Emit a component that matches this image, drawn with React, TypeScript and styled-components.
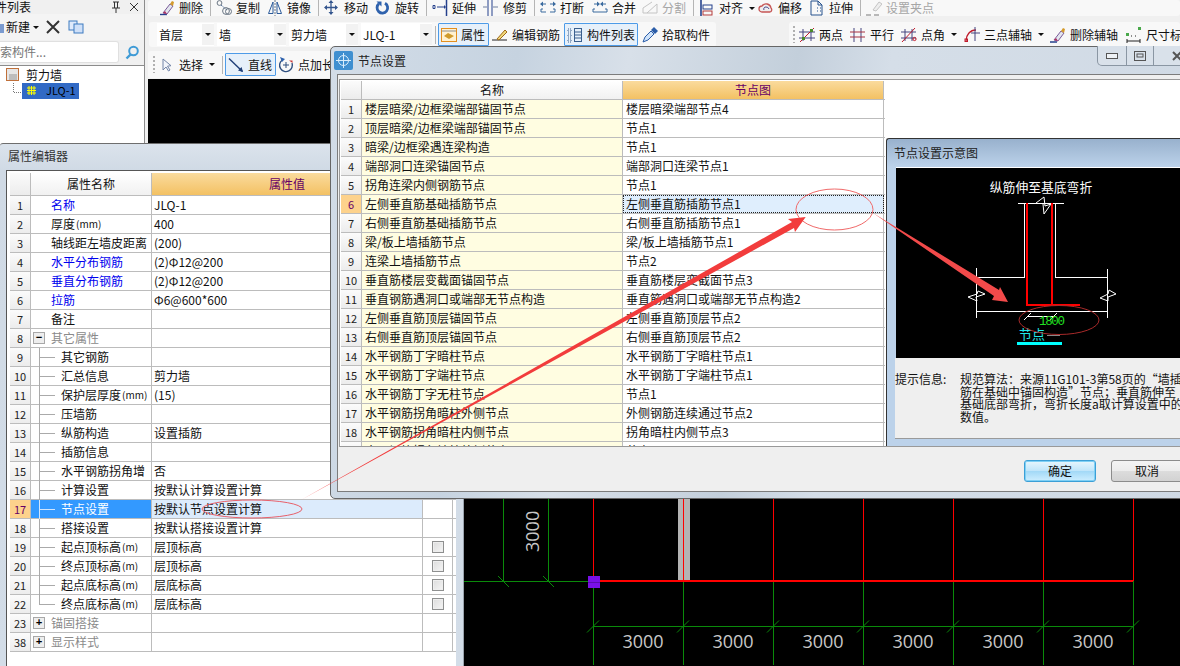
import React from "react";
import styled, { createGlobalStyle } from "styled-components";

const Global = createGlobalStyle`
  html, body { margin: 0; padding: 0; background: #f0f0f0; }
  #root { width: 1180px; height: 666px; }
  * { box-sizing: border-box; }
`;

const FONT = `"Noto Sans CJK SC", "Liberation Sans", sans-serif`;

const Page = styled.div`
  position: relative;
  width: 1180px;
  height: 666px;
  overflow: hidden;
  display: flex;
  background: #f0f0f0;
  font: 12px/1 ${FONT};
  color: #111;
`;

/* ---------- left component list ---------- */
const SidePane = styled.aside`
  width: 145px;
  flex: none;
  display: flex;
  flex-direction: column;
  border-right: 1px solid #8c8c8c;
  background: #f0f0f0;
  overflow: hidden;
`;
const PaneTitle = styled.div`
  height: 14px;
  flex: none;
  display: flex;
  align-items: center;
  justify-content: space-between;
  padding-right: 4px;
  white-space: nowrap;
`;
const PaneTitleText = styled.span`
  margin-left: -17px;
`;
const PaneTools = styled.div`
  height: 26px;
  flex: none;
  display: flex;
  align-items: center;
  font-size: 12px;
  background: #f4f4f4;
`;
const PaneNew = styled.span`
  width: 40px;
  display: flex;
  align-items: center;
  gap: 3px;
`;
const CopyGlyph = styled.svg`
  margin-left: 8px;
`;
const SearchRow = styled.div`
  height: 24px;
  flex: none;
  display: flex;
  align-items: center;
  background: #f0f0f0;
`;
const SearchBox = styled.div`
  width: 119px;
  height: 22px;
  background: #fff;
  color: #777;
  display: flex;
  align-items: center;
  border-radius: 0 3px 3px 0;
  border: 1px solid #e0e0e0;
  border-left: 0;
  white-space: nowrap;
  overflow: hidden;
`;
const SearchBtn = styled.span`
  margin-left: 6px;
  display: flex;
`;
const Tree = styled.div`
  flex: 1;
  margin-top: 1px;
  background: #fff;
  border-top: 1px solid #8c8c8c;
  padding-top: 1px;
`;
const TreeRoot = styled.div`
  height: 15px;
  display: flex;
  align-items: center;
  gap: 7px;
  padding-left: 6px;
`;
const TreeLeaf = styled.div`
  height: 17px;
  display: flex;
  align-items: center;
  padding-left: 13px;
`;
const TreeLeafSel = styled.div`
  width: 57px;
  height: 16px;
  background: #316ac5;
  display: flex;
  align-items: center;
  gap: 9px;
  padding-left: 4px;
  color: #000;
  font-size: 11px;
`;

/* ---------- workspace ---------- */
const Work = styled.main`
  flex: 1;
  min-width: 0;
  margin-left: 3px;
  display: flex;
  flex-direction: column;
`;
const BarRow = styled.div<{ $h: number; $mt: number }>`
  height: ${(p) => p.$h}px;
  margin-top: ${(p) => p.$mt}px;
  flex: none;
  display: flex;
  overflow: hidden;
`;
const Bar = styled.div<{ $w?: number; $ml?: number; $pl: number }>`
  ${(p) => (p.$w ? `width: ${p.$w}px; flex: none;` : "flex: 1;")}
  margin-left: ${(p) => p.$ml || 0}px;
  padding-left: ${(p) => p.$pl}px;
  display: flex;
  align-items: center;
  background: #f8f8f8;
  border-radius: 3px;
  white-space: nowrap;
  overflow: hidden;
`;
const Tool = styled.span<{ $w: number; $off?: boolean; $on?: boolean; $ml?: number }>`
  width: ${(p) => p.$w}px;
  margin-left: ${(p) => p.$ml || 0}px;
  flex: none;
  display: flex;
  align-items: center;
  height: 23px;
  color: ${(p) => (p.$off ? "#a6a6a6" : "#111")};
  ${(p) => p.$on && "border: 1px solid #4d9be8; background: #e6f0fa; border-radius: 1px; padding-left: 2px;"}
  svg { flex: none; margin-right: 4px; }
`;
const Drop = styled.span`
  width: 0;
  height: 0;
  margin-left: 6px;
  border: 3px solid transparent;
  border-top: 3px solid #111;
  border-bottom: 0;
  flex: none;
`;
const Sep = styled.span<{ $mr?: number }>`
  width: 1px;
  height: 18px;
  margin-right: ${(p) => p.$mr ?? 5}px;
  background: #b5b5b5;
  flex: none;
`;
const Grip = styled.span`
  width: 2px;
  height: 17px;
  margin-right: 4px;
  flex: none;
  background: repeating-linear-gradient(to bottom, #b0b0b0 0 2px, transparent 2px 4px);
`;
const Combo = styled.span<{ $w: number }>`
  width: ${(p) => p.$w}px;
  height: 23px;
  margin-right: 3px;
  flex: none;
  display: flex;
  align-items: center;
  justify-content: space-between;
  padding-left: 2px;
  background: #fff;
  font-size: 12px;
`;
const ComboBtn = styled.span`
  width: 12px;
  height: 21px;
  background: #f2f2f2;
  display: flex;
  align-items: center;
  justify-content: center;
`;
const Caret = styled.i`
  width: 0;
  height: 0;
  border: 3px solid transparent;
  border-top: 3px solid #111;
  border-bottom: 0;
`;
const Canvas = styled.div`
  flex: 1;
  margin-top: 1px;
  background: #000;
  svg { display: block; }
`;

/* ---------- floating windows ---------- */
const WinProp = styled.section`
  position: absolute;
  left: 0;
  top: 143px;
  width: 464px;
  height: 523px;
  padding: 26px 7px 0 6px;
  background: linear-gradient(to bottom, #dbe3ec 0, #d0dae5 26px, #d3dde8 100%);
  border-top: 1px solid #6e6e6e;
  border-right: 1px solid #9aa3ad;
  border-radius: 3px 0 0 0;
`;
const WinTitle = styled.div`
  position: absolute;
  left: 8px;
  top: 5px;
  color: #333;
  font-size: 12px;
  line-height: 14px;
`;
const PropBody = styled.div`
  height: 100%;
  padding: 2px 0 0 3px;
  background: #fff;
  border-left: 1px solid #555;
  border-top: 1px solid #555;
`;
const Row = styled.div<{ $h?: number }>`
  display: flex;
  height: ${(p) => p.$h || 19}px;
  border-bottom: 1px solid #bcbcbc;
`;
const NumCell = styled.div<{ $sel?: boolean }>`
  width: 21px;
  flex: none;
  display: flex;
  align-items: center;
  justify-content: center;
  border-right: 1px solid #bcbcbc;
  font-size: 11px;
  color: ${(p) => (p.$sel ? "#660066" : "#222")};
  background: ${(p) => (p.$sel ? "#fdd28c" : "linear-gradient(to bottom,#fbfbfb,#ececec)")};
`;
const HeadCell = styled.div<{ $w: number; $hot?: boolean }>`
  width: ${(p) => p.$w}px;
  flex: none;
  display: flex;
  align-items: center;
  justify-content: center;
  border-right: 1px solid #bcbcbc;
  color: ${(p) => (p.$hot ? "#660066" : "#111")};
  background: ${(p) =>
    p.$hot ? "linear-gradient(to bottom,#fadb9d,#f3c163)" : "linear-gradient(to bottom,#fff,#f1f1f1)"};
`;
const NameCell = styled.div<{ $tone: string; $kid: number; $sel?: boolean; $end?: boolean }>`
  position: relative;
  width: 121px;
  flex: none;
  display: flex;
  align-items: center;
  white-space: nowrap;
  border-right: 1px solid #bcbcbc;
  padding-left: ${(p) => (p.$kid ? 30 : 20)}px;
  color: ${(p) => (p.$sel ? "#fff" : p.$tone)};
  background: ${(p) => (p.$sel ? "#3399ff" : "#fff")};
  ${(p) =>
    p.$kid
      ? `
    &::before { content: ""; position: absolute; left: 8px; top: 0; width: 1px; height: ${p.$end ? 10 : 19}px; background: ${p.$sel ? "#cfe5ff" : "#aaa"}; }
    &::after { content: ""; position: absolute; left: 8px; top: 9px; width: 16px; height: 1px; background: ${p.$sel ? "#cfe5ff" : "#aaa"}; }
  `
      : ""}
`;
const Unit = styled.span`
  font-size: 10px;
  margin-left: 1px;
`;
const Expander = styled.span`
  position: absolute;
  left: 2px;
  top: 3px;
  width: 12px;
  height: 12px;
  border: 1px solid #a8a8a8;
  background: #eee;
  color: #000;
  display: flex;
  align-items: center;
  justify-content: center;
  font: 700 11px/1 "Liberation Mono", monospace;
`;
const ValCell = styled.div<{ $sel?: boolean }>`
  width: 271px;
  flex: none;
  display: flex;
  align-items: center;
  padding-left: 2px;
  white-space: nowrap;
  border-right: 1px solid #bcbcbc;
  background: ${(p) => (p.$sel ? "#dcebfc" : "#fff")};
`;
const CheckCell = styled.div`
  width: 30px;
  flex: none;
  display: flex;
  align-items: center;
  justify-content: center;
  border-right: 1px solid #bcbcbc;
`;
const CheckBox = styled.span`
  width: 12px;
  height: 12px;
  border: 1px solid #8e8f8f;
  background: linear-gradient(135deg, #dcdcdc, #f5f5f5);
  box-shadow: inset 0 0 0 1px #eee;
`;

const WinNode = styled.section`
  position: absolute;
  left: 330px;
  top: 46px;
  width: 860px;
  height: 453px;
  display: flex;
  flex-direction: column;
  padding: 0 0 6px 6px;
  border: 1px solid #666;
  border-radius: 5px 0 0 5px;
  background: linear-gradient(100deg, #d3dde8 0, #c6d3e0 20%, #d8e0e9 32%, #c3cfdb 50%, #d5dee8 60%, #cfd9e4 100%);
`;
const NodeTitle = styled.header`
  height: 27px;
  flex: none;
  display: flex;
  align-items: center;
  gap: 5px;
  color: #222;
  svg { margin-left: -3px; }
`;
const WinBtns = styled.div`
  position: absolute;
  left: 766px;
  top: -1px;
  width: 103px;
  height: 20px;
  display: flex;
  border: 1px solid #8a96a3;
  border-top: 0;
  border-radius: 0 0 5px 5px;
  background: #d9e1ea;
`;
const WinBtn = styled.span<{ $w: number }>`
  width: ${(p) => p.$w}px;
  flex: none;
  display: flex;
  align-items: center;
  justify-content: center;
  & + & { border-left: 1px solid #8a96a3; }
`;
const NodeInner = styled.div`
  flex: 1;
  min-height: 0;
  display: flex;
  flex-direction: column;
  background: #efefef;
  border: 1px solid #7c7c7c;
  border-right: 0;
  padding-top: 4px;
`;
const NodeMain = styled.div`
  height: 368px;
  flex: none;
  margin-left: 1px;
  display: flex;
  background: #fff;
  border-top: 1px solid #999;
  border-left: 1px solid #999;
  border-bottom: 1px solid #999;
  overflow: hidden;
`;
const NodeTable = styled.div`
  width: 545px;
  flex: none;
  padding-top: 1px;
  padding-left: 1px;
`;
const NodeName = styled.div`
  width: 261px;
  flex: none;
  display: flex;
  align-items: center;
  padding-left: 3px;
  white-space: nowrap;
  border-right: 1px solid #bcbcbc;
  background: #fffde1;
`;
const NodeVal = styled.div<{ $sel?: boolean }>`
  width: 261px;
  flex: none;
  display: flex;
  align-items: center;
  padding-left: 3px;
  white-space: nowrap;
  border-right: 1px solid #bcbcbc;
  background: ${(p) => (p.$sel ? "#dfeefd" : "#fff")};
  ${(p) => p.$sel && "outline: 1px dotted #222; outline-offset: -1px;"}
`;
const Preview = styled.div`
  flex: 1;
  margin-top: 58px;
  margin-left: 1px;
  display: flex;
  flex-direction: column;
  background: linear-gradient(to bottom, #98b1cd 0, #bcd2ea 28px);
  border: 1px solid #333;
  border-right: 0;
  border-bottom: 0;
  border-radius: 3px 0 0 0;
  padding: 0 0 7px 9px;
`;
const PreviewTitle = styled.div`
  height: 28px;
  flex: none;
  display: flex;
  align-items: center;
  margin-left: -2px;
  color: #222;
`;
const PreviewPic = styled.div`
  height: 191px;
  flex: none;
  background: #000;
  border-top: 1px solid #fff;
  svg { display: block; }
`;
const HintBox = styled.div`
  flex: 1;
  display: flex;
  gap: 10px;
  padding: 15px 0 0 0;
  background: #efefef;
  border-bottom: 1px solid #9a9a9a;
  margin-left: -1px;
  line-height: 12.5px;
  font-size: 12px;
`;
const HintLabel = styled.span`
  width: 55px;
  flex: none;
  white-space: nowrap;
`;
const HintText = styled.div`
  flex: none;
  white-space: nowrap;
`;
const BtnRow = styled.div`
  flex: 1;
  display: flex;
  justify-content: flex-end;
  gap: 15px;
  padding: 13px 6px 0 0;
`;
const DlgBtn = styled.button<{ $primary?: boolean }>`
  width: 72px;
  height: 22px;
  padding: 0;
  font: 12px/1 ${FONT};
  color: #111;
  border-radius: 3px;
  border: 1px solid ${(p) => (p.$primary ? "#3c9fd6" : "#8c8c8c")};
  background: ${(p) =>
    p.$primary
      ? "linear-gradient(to bottom,#e8f6fd 0,#bfe5fa 50%,#a3d9f7 52%,#cdeeff 100%)"
      : "linear-gradient(to bottom,#f4f4f4 0,#ececec 50%,#dcdcdc 52%,#d2d2d2 100%)"};
  ${(p) => p.$primary && "box-shadow: inset 0 0 0 1px #7fd0f5;"}
`;
const Overlay = styled.svg`
  position: absolute;
  left: 0;
  top: 0;
  pointer-events: none;
`;

/* ---------- icons ---------- */
type IconName =
  | "erase" | "copy" | "mirror" | "move" | "rotate" | "extend" | "trim" | "break" | "merge" | "split"
  | "align" | "offset" | "stretch" | "grip" | "prop" | "edit" | "list" | "pick" | "two" | "para"
  | "angle" | "arc" | "delAxis" | "dim" | "cursor" | "line" | "addLen";

const S: React.FC<{ children: React.ReactNode; w?: number }> = ({ children, w = 16 }) => (
  <svg width={w} height={16} viewBox={`0 0 ${w} 16`} fill="none">{children}</svg>
);

const Ico: React.FC<{ n: IconName }> = ({ n }) => {
  switch (n) {
    case "erase":
      return <S><path d="M1 14.5h7" stroke="#24408c" strokeWidth="1.4" /><path d="M4 13 11 4l3 2-6 8z" fill="#e3e6ee" stroke="#7a5b9a" /><path d="M11 4l2-3 2 1-1 4z" fill="#d49a2a" /><path d="M4 13l2-2 2 3z" fill="#b03060" /></S>;
    case "copy":
      return <S><circle cx="3.5" cy="3" r="2.4" stroke="#6a7684" /><path d="M5 5l6 5" stroke="#4f6f9a" strokeDasharray="2 1" /><circle cx="10" cy="11" r="3.4" stroke="#6a7684" /><circle cx="12.5" cy="11.5" r="3" stroke="#6a7684" /></S>;
    case "mirror":
      return <S><path d="M6 2 1.5 13.5H6z" stroke="#2b5a9a" /><path d="M10 2l4.5 11.5H10z" stroke="#2b5a9a" /><path d="M8 0v16" stroke="#6a7684" strokeDasharray="2 1" /></S>;
    case "move":
      return <S><path d="M7 1v13M1 7.5h12" stroke="#34568e" strokeWidth="1.3" /><path d="M7 0l2.5 3h-5zM7 15l2.5-3h-5zM0 7.5l3-2.5v5zM14 7.5l-3-2.5v5z" fill="#34568e" /></S>;
    case "rotate":
      return <S><path d="M10 3.2A5.3 5.3 0 1 1 4 3.7" stroke="#2f62ad" strokeWidth="2.8" /><path d="M1.5 1.5h5v5z" fill="#2f62ad" /></S>;
    case "extend":
      return <S><path d="M1 5.5h2v3H1zM5 7h7" stroke="#24408c" /><path d="M14.5 0v16" stroke="#24408c" strokeWidth="1.5" /><path d="M12 5l2 2-2 2z" fill="#24408c" /></S>;
    case "trim":
      return <S><path d="M5 0v16M9 0v16" stroke="#24408c" /><path d="M0 7h4M10 7h5" stroke="#6e7e9e" /></S>;
    case "break":
      return <S><path d="M1 12h5M10 12h5M1 12V9h2M15 12V9h-2" stroke="#3a6a9e" /><path d="M2 4h4M10 4h4" stroke="#3a6a9e" /><path d="M0 4l3-2.5v5zM16 4l-3-2.5v5z" fill="#3a6a9e" /></S>;
    case "merge":
      return <S><path d="M1 12h14M1 12V9h2M15 12V9h-2" stroke="#3a6a9e" /><path d="M2 4h3M11 4h3" stroke="#3a6a9e" /><path d="M8 4L5 1.5v5zM8 4l3-2.5v5z" fill="#3a6a9e" /></S>;
    case "split":
      return <S><path d="M1 13h14M1 13V8l9-6M5 13 15 4v9" stroke="#c4c4c4" /></S>;
    case "align":
      return <S><path d="M2 0v16" stroke="#24408c" strokeWidth="1.6" /><rect x="4" y="5" width="9" height="4" stroke="#24408c" /><rect x="4" y="11" width="9" height="4" stroke="#b33a3a" /></S>;
    case "offset":
      return <S><path d="M4 12a3 3 0 0 1 0-6 5 5 0 0 1 9 2 2.4 2.4 0 0 1-1 4z" stroke="#c65656" strokeWidth="1.3" fill="#eee" /><path d="M6 10a2 2 0 0 1 2-3 3 3 0 0 1 3 2" stroke="#4c4c90" /></S>;
    case "stretch":
      return <S><path d="M2 1h7l4 4v10H2z" stroke="#24508c" /><path d="M9 1v4h4" stroke="#24508c" /><path d="M8 8h1M8 11h1M11 8h1M11 11h1" stroke="#24508c" /></S>;
    case "grip":
      return <S><path d="M0 15h5M8 15h5" stroke="#b8b8b8" strokeWidth="2" /><path d="M7 10 13 2l3 2-6 7z" stroke="#c4c4c4" fill="#eee" /></S>;
    case "prop":
      return <S><rect x="0.5" y="1.5" width="15" height="13" fill="#fff1d0" stroke="#e38f1f" /><path d="M1 4h14" stroke="#8f8f8f" /><path d="M3 9l4-3 6 3-5 3z" fill="#d09b2c" /></S>;
    case "edit":
      return <S><path d="M0 13h15" stroke="#222" /><path d="M5 12 13 3l2 2-8 8z" fill="#f0d87a" stroke="#a06a1a" /></S>;
    case "list":
      return <S><path d="M1 2h3v3H1zM1 7h3v3H1zM1 12h3v3H1z" stroke="#3a5f8e" strokeDasharray="1 1" /><rect x="7.5" y="1.5" width="7" height="13" stroke="#3a5f8e" /><path d="M8 5h6M8 8h6M8 11h6" stroke="#3a5f8e" /></S>;
    case "pick":
      return <S><path d="M1 15l2-5 6-6 3 3-6 6z" fill="#cfe3fa" stroke="#2b5da8" /><path d="M9 3l3-3 4 4-3 3z" fill="#2b5da8" /></S>;
    case "two":
      return <S><path d="M4 2v12M12 2v12M0 5h16M0 11h16" stroke="#45457f" /><path d="M1 15 15 1" stroke="#c01a2a" /><rect x="3" y="10" width="3" height="3" fill="#4b8a2a" /><rect x="11" y="2" width="3" height="3" fill="#4b8a2a" /></S>;
    case "para":
      return <S><path d="M4 1v14M11 1v14" stroke="#45457f" /><path d="M0 5h15M0 10h15" stroke="#a83040" /></S>;
    case "angle":
      return <S><path d="M4 2v12M11 2v12M0 5h15M0 11h15" stroke="#45457f" /><path d="M1 15 14 1" stroke="#c01a2a" /><circle cx="13.5" cy="12" r="1.6" stroke="#c01a2a" /></S>;
    case "arc":
      return <S><path d="M2 14C2 8 6 3 12 3" stroke="#c01a2a" strokeWidth="1.3" /><path d="M11 0v14M7 6h9" stroke="#45457f" /><rect x="1" y="12" width="2.5" height="2.5" stroke="#c01a2a" /></S>;
    case "delAxis":
      return <S><path d="M0 15h7" stroke="#24408c" strokeWidth="1.4" /><path d="M4 13 11 4l3 2-6 8z" fill="#e3e6ee" stroke="#7a5b9a" /><path d="M11 4l2-3 2 1-1 4z" fill="#d49a2a" /><path d="M4 13l2-2 2 3z" fill="#b03060" /></S>;
    case "dim":
      return <S><rect x="0" y="6" width="3" height="3" fill="#49a84a" /><rect x="12" y="0" width="3" height="3" fill="#49a84a" /><path d="M1 12v4M14 12v4M1 14h13M5 9h1M9 9h1" stroke="#222" /></S>;
    case "cursor":
      return <S><path d="M4 2v11l3-3 2.5 4 1.5-1-2.5-3.8 3.5-.5z" fill="#f2f5fb" stroke="#7385a8" /></S>;
    case "line":
      return <S><path d="M1 1.5 14.5 14.5" stroke="#1f3f78" strokeWidth="1.4" /><path d="M15 15l-5-1.4 3.6-3.6z" fill="#1f3f78" /></S>;
    case "addLen":
      return <S><path d="M4 3.2A6.4 6.4 0 1 0 14 6" stroke="#2f4f7f" strokeWidth="1.4" /><path d="M5 8h6M8 5v6" stroke="#2f4f7f" /><path d="M2 0l5 2-3 3z" fill="#2f62ad" /><path d="M11 3.5h3.5v2.5z" fill="#c73a3a" /></S>;
  }
};

/* ---------- data ---------- */
type T = { i: IconName; t: string; w: number; off?: boolean; drop?: boolean; on?: boolean; sep?: number; ml?: number };

const row1: T[] = [
  { i: "erase", t: "删除", w: 51, sep: 5 },
  { i: "copy", t: "复制", w: 51 },
  { i: "mirror", t: "镜像", w: 51, sep: 5 },
  { i: "move", t: "移动", w: 51 },
  { i: "rotate", t: "旋转", w: 51, sep: 5 },
  { i: "extend", t: "延伸", w: 51 },
  { i: "trim", t: "修剪", w: 51, sep: 5 },
  { i: "break", t: "打断", w: 52 },
  { i: "merge", t: "合并", w: 50 },
  { i: "split", t: "分割", w: 51, off: true, sep: 5 },
  { i: "align", t: "对齐", w: 59, drop: true },
  { i: "offset", t: "偏移", w: 51 },
  { i: "stretch", t: "拉伸", w: 51, sep: 5 },
  { i: "grip", t: "设置夹点", w: 73, off: true },
];
const row2Left: T[] = [
  { i: "prop", t: "属性", w: 51, on: true },
  { i: "edit", t: "编辑钢筋", w: 72, ml: 3 },
  { i: "list", t: "构件列表", w: 74, on: true },
  { i: "pick", t: "拾取构件", w: 72, ml: 4 },
];
const row2Right: T[] = [
  { i: "two", t: "两点", w: 51 },
  { i: "para", t: "平行", w: 51 },
  { i: "angle", t: "点角", w: 63, drop: true },
  { i: "arc", t: "三点辅轴", w: 86, drop: true },
  { i: "delAxis", t: "删除辅轴", w: 76 },
  { i: "dim", t: "尺寸标注", w: 70 },
];
const row3: T[] = [
  { i: "cursor", t: "选择", w: 63, drop: true, sep: 2 },
  { i: "line", t: "直线", w: 51, on: true },
  { i: "addLen", t: "点加长度", w: 70, ml: 2 },
];

const Tools: React.FC<{ list: T[] }> = ({ list }) => (
  <>
    {list.map((x) => (
      <React.Fragment key={x.t}>
        <Tool $w={x.w} $off={x.off} $on={x.on} $ml={x.ml}>
          <Ico n={x.i} />
          {x.t}
          {x.drop && <Drop />}
        </Tool>
        {x.sep !== undefined && <Sep $mr={x.sep} />}
      </React.Fragment>
    ))}
  </>
);

const BLUE = "#0000ee";
const GRAY = "#8a8a8a";
const BLK = "#111";
type P = { n: number; name: string; unit?: string; val?: string; tone?: string; kid?: boolean; exp?: string; chk?: boolean; sel?: boolean; end?: boolean };
const props: P[] = [
  { n: 1, name: "名称", val: "JLQ-1", tone: BLUE },
  { n: 2, name: "厚度", unit: "(mm)", val: "400" },
  { n: 3, name: "轴线距左墙皮距离", val: "(200)" },
  { n: 4, name: "水平分布钢筋", val: "(2)Φ12@200", tone: BLUE },
  { n: 5, name: "垂直分布钢筋", val: "(2)Φ12@200", tone: BLUE },
  { n: 6, name: "拉筋", val: "Φ6@600*600", tone: BLUE },
  { n: 7, name: "备注" },
  { n: 8, name: "其它属性", tone: GRAY, exp: "−" },
  { n: 9, name: "其它钢筋", kid: true },
  { n: 10, name: "汇总信息", val: "剪力墙", kid: true },
  { n: 11, name: "保护层厚度", unit: "(mm)", val: "(15)", kid: true },
  { n: 12, name: "压墙筋", kid: true },
  { n: 13, name: "纵筋构造", val: "设置插筋", kid: true },
  { n: 14, name: "插筋信息", kid: true },
  { n: 15, name: "水平钢筋拐角增", val: "否", kid: true },
  { n: 16, name: "计算设置", val: "按默认计算设置计算", kid: true },
  { n: 17, name: "节点设置", val: "按默认节点设置计算", kid: true, sel: true },
  { n: 18, name: "搭接设置", val: "按默认搭接设置计算", kid: true },
  { n: 19, name: "起点顶标高", unit: "(m)", val: "层顶标高", kid: true, chk: true },
  { n: 20, name: "终点顶标高", unit: "(m)", val: "层顶标高", kid: true, chk: true },
  { n: 21, name: "起点底标高", unit: "(m)", val: "层底标高", kid: true, chk: true },
  { n: 22, name: "终点底标高", unit: "(m)", val: "层底标高", kid: true, chk: true, end: true },
  { n: 23, name: "锚固搭接", tone: GRAY, exp: "+" },
  { n: 38, name: "显示样式", tone: GRAY, exp: "+" },
];
const nodes: [string, string][] = [
  ["楼层暗梁/边框梁端部锚固节点", "楼层暗梁端部节点4"],
  ["顶层暗梁/边框梁端部锚固节点", "节点1"],
  ["暗梁/边框梁遇连梁构造", "节点1"],
  ["端部洞口连梁锚固节点", "端部洞口连梁节点1"],
  ["拐角连梁内侧钢筋节点", "节点1"],
  ["左侧垂直筋基础插筋节点", "左侧垂直筋插筋节点1"],
  ["右侧垂直筋基础插筋节点", "右侧垂直筋插筋节点1"],
  ["梁/板上墙插筋节点", "梁/板上墙插筋节点1"],
  ["连梁上墙插筋节点", "节点2"],
  ["垂直筋楼层变截面锚固节点", "垂直筋楼层变截面节点3"],
  ["垂直钢筋遇洞口或端部无节点构造", "垂直筋遇洞口或端部无节点构造2"],
  ["左侧垂直筋顶层锚固节点", "左侧垂直筋顶层节点2"],
  ["右侧垂直筋顶层锚固节点", "右侧垂直筋顶层节点2"],
  ["水平钢筋丁字暗柱节点", "水平钢筋丁字暗柱节点1"],
  ["水平钢筋丁字端柱节点", "水平钢筋丁字端柱节点1"],
  ["水平钢筋丁字无柱节点", "节点1"],
  ["水平钢筋拐角暗柱外侧节点", "外侧钢筋连续通过节点2"],
  ["水平钢筋拐角暗柱内侧节点", "拐角暗柱内侧节点3"],
  ["水平钢筋拐角端柱外侧节点", "节点1"],
];

const gridX = [593, 683, 773, 863, 953, 1043, 1133];

const CanvasDrawing = () => (
  <svg width="1032" height="586" viewBox="148 80 1032 586" fontFamily='"Open Sans", "Liberation Sans", sans-serif'>
    <rect x="678" y="480" width="12" height="102" fill="#b4b4b4" />
    {gridX.map((x) => (
      <g key={x} shapeRendering="crispEdges">
        <line x1={x} y1={582} x2={x} y2={666} stroke="#0a8a0a" />
        <line x1={x} y1={480} x2={x} y2={582} stroke="#ff0000" />
      </g>
    ))}
    <g shapeRendering="crispEdges">
      <line x1="503.5" y1="480" x2="503.5" y2="582" stroke="#0a8a0a" />
      <line x1="548.5" y1="480" x2="548.5" y2="582" stroke="#0a8a0a" />
      <line x1="464" y1="582" x2="593" y2="582" stroke="#0a8a0a" />
      <line x1="593" y1="627.5" x2="1133" y2="627.5" stroke="#0a8a0a" />
      <line x1="593" y1="581.5" x2="1133" y2="581.5" stroke="#ff0000" strokeWidth="2" />
      <rect x="588" y="577" width="12" height="12" fill="#7a10e8" />
      <line x1="588" y1="583" x2="600" y2="583" stroke="#000" strokeOpacity=".25" />
    </g>
    <path d="M498 577l11 11M543 577l11 11" stroke="#0a8a0a" />
    {gridX.map((x) => (
      <path key={x} d={`M${x - 6} 633.5l12-12`} stroke="#0a8a0a" />
    ))}
    {gridX.slice(0, 6).map((x) => (
      <text key={x} x={x + 50} y="649" textAnchor="middle" fontSize="18" fill="#c8c8c8">3000</text>
    ))}
    <text transform="translate(539 553) rotate(-90)" fontSize="18" fill="#c8c8c8">3000</text>
  </svg>
);

/* page coordinates inside a viewBox that starts at the picture's corner */
const Schematic = () => (
  <svg width="290" height="190" viewBox="896 168 290 190" fontFamily='"Noto Sans CJK SC", sans-serif'>
    <text x="1041" y="192" textAnchor="middle" fill="#fff" fontSize="12.8">纵筋伸至基底弯折</text>
    <g stroke="#fff" fill="none" shapeRendering="crispEdges">
      <path d="M1018 203.5h46M1024.5 203.5V277.5H976.5M1055.5 203.5V277.5H1107.5" />
      <path d="M976.5 268v50M1107.5 269v49M976 311.5h132M1027 316.5h28" />
    </g>
    <g stroke="#fff" fill="none">
      <path d="M1036 203l8-6 1 9 6-2-7 10-1-10" />
      <path d="M968 297l9-3 1-3 7 3-9 3 1 4zM1100 298l8-4 1-4 7 4-8 3v4z" />
      <path d="M1024 320l7-7M1050 320l7-7" />
    </g>
    <g stroke="#ff0000" strokeWidth="2" fill="none" shapeRendering="crispEdges">
      <path d="M1027 203V304.5H1080M1052 203V304" />
    </g>
    <text x="1039" y="325" fill="#22e022" fontSize="12.5" fontFamily='"Liberation Mono", monospace' textLength="26">1800</text>
    <text x="1019" y="339" fill="#22e8e8" fontSize="13">节点</text>
    <path d="M1047 335.5h13" stroke="#888" />
    <rect x="1017" y="342" width="45" height="3" fill="#00ffff" />
  </svg>
);

export default function App() {
  return (
    <Page>
      <Global />
      <SidePane>
        <PaneTitle>
          <PaneTitleText>构件列表</PaneTitleText>
          <svg width="30" height="12" viewBox="0 0 30 12" fill="none">
            <path d="M3 1h6M4.5 1v6M7.5 1v6M2 7h8M6 7v5" stroke="#333" />
            <path d="M20 2l8 8M28 2l-8 8" stroke="#333" />
          </svg>
        </PaneTitle>
        <PaneTools>
          <svg width="6" height="14" viewBox="0 0 6 14"><rect x="-6" y="4" width="10" height="9" fill="#7b9bd0" /></svg>
          <PaneNew>新建<Caret /></PaneNew>
          <svg width="14" height="14" viewBox="0 0 14 14" fill="none"><path d="M1 1l12 12M13 1 1 13" stroke="#333" strokeWidth="2" /></svg>
          <CopyGlyph width="16" height="14" viewBox="0 0 16 14" fill="none"><rect x="1" y="1" width="8" height="9" fill="#dfeafb" stroke="#3d7ac0" /><rect x="6" y="4" width="9" height="9" fill="#cfe0f8" stroke="#3d7ac0" /></CopyGlyph>
        </PaneTools>
        <SearchRow>
          <SearchBox>索构件...</SearchBox>
          <SearchBtn>
            <svg width="15" height="15" viewBox="0 0 15 15" fill="none"><circle cx="8.5" cy="6" r="4.3" stroke="#3f9bd6" strokeWidth="2" /><path d="M5.5 9.5 1.5 13.5" stroke="#3f9bd6" strokeWidth="2.4" /></svg>
          </SearchBtn>
        </SearchRow>
        <Tree>
          <TreeRoot>
            <svg width="13" height="13" viewBox="0 0 13 13"><rect x=".5" y=".5" width="12" height="12" fill="#e6e6e6" stroke="#c0703a" /><rect x="3" y="6" width="8" height="6" fill="#bdbdbd" /></svg>
            剪力墙
          </TreeRoot>
          <TreeLeaf>
            <svg width="9" height="16" viewBox="0 0 9 16" fill="none"><path d="M.5 0v9.5H9" stroke="#777" strokeDasharray="1 1" /></svg>
            <TreeLeafSel>
              <svg width="11" height="11" viewBox="0 0 11 11" fill="none"><path d="M1 3h9M1 5.5h9M1 8h9M3 1v9M5.5 1v9M8 1v9" stroke="#ffff00" /></svg>
              JLQ-1
            </TreeLeafSel>
          </TreeLeaf>
        </Tree>
      </SidePane>

      <Work>
        <BarRow $h={16} $mt={0}>
          <Bar $pl={11}><Tools list={row1} /></Bar>
        </BarRow>
        <BarRow $h={25} $mt={6}>
          <Bar $w={567} $ml={1} $pl={8}>
            <Combo $w={57}>首层<ComboBtn><Caret /></ComboBtn></Combo>
            <Combo $w={69}>墙<ComboBtn><Caret /></ComboBtn></Combo>
            <Combo $w={69}>剪力墙<ComboBtn><Caret /></ComboBtn></Combo>
            <Combo $w={71}>JLQ-1<ComboBtn><Caret /></ComboBtn></Combo>
            <Sep $mr={2} />
            <Tools list={row2Left} />
          </Bar>
          <Bar $ml={73} $pl={4}>
            <Grip />
            <Tools list={row2Right} />
          </Bar>
        </BarRow>
        <BarRow $h={27} $mt={4}>
          <Bar $pl={5}>
            <Grip />
            <Tools list={row3} />
          </Bar>
        </BarRow>
        <Canvas><CanvasDrawing /></Canvas>
      </Work>

      <WinProp>
        <WinTitle>属性编辑器</WinTitle>
        <PropBody>
          <Row $h={23}>
            <NumCell />
            <HeadCell $w={121}>属性名称</HeadCell>
            <HeadCell $w={271} $hot>属性值</HeadCell>
            <HeadCell $w={30} />
          </Row>
          {props.map((r) => (
            <Row key={r.n}>
              <NumCell $sel={r.sel}>{r.n}</NumCell>
              <NameCell $tone={r.tone || BLK} $kid={r.kid ? 1 : 0} $sel={r.sel} $end={r.end}>
                {r.exp && <Expander>{r.exp}</Expander>}
                {r.name}
                {r.unit && <Unit>{r.unit}</Unit>}
              </NameCell>
              <ValCell $sel={r.sel}>{r.val}</ValCell>
              <CheckCell>{r.chk && <CheckBox />}</CheckCell>
            </Row>
          ))}
        </PropBody>
      </WinProp>

      <WinNode>
        <NodeTitle>
          <svg width="19" height="19" viewBox="0 0 19 19" fill="none">
            <rect width="19" height="19" rx="2" fill="#3f8fd0" />
            <circle cx="9.5" cy="9.5" r="5" stroke="#d8ecfb" />
            <path d="M9.5 2v15M2 9.5h15" stroke="#d8ecfb" />
          </svg>
          节点设置
        </NodeTitle>
        <WinBtns>
          <WinBtn $w={28}><svg width="12" height="6" viewBox="0 0 12 6" fill="none"><rect x=".5" y=".5" width="11" height="5" fill="#eef2f6" stroke="#555" /></svg></WinBtn>
          <WinBtn $w={27}><svg width="12" height="10" viewBox="0 0 12 10" fill="none"><rect x=".5" y=".5" width="11" height="9" stroke="#555" /><rect x="3" y="3" width="6" height="3" stroke="#555" /></svg></WinBtn>
          <WinBtn $w={46}><svg width="10" height="10" viewBox="0 0 10 10" fill="none"><path d="M1 1l8 8M9 1 1 9" stroke="#555" strokeWidth="2" /></svg></WinBtn>
        </WinBtns>
        <NodeInner>
          <NodeMain>
            <NodeTable>
              <Row>
                <NumCell />
                <HeadCell $w={261}>名称</HeadCell>
                <HeadCell $w={261} $hot>节点图</HeadCell>
              </Row>
              {nodes.map(([a, b], i) => (
                <Row key={i}>
                  <NumCell $sel={i === 5}>{i + 1}</NumCell>
                  <NodeName>{a}</NodeName>
                  <NodeVal $sel={i === 5}>{b}</NodeVal>
                </Row>
              ))}
            </NodeTable>
            <Preview>
              <PreviewTitle>节点设置示意图</PreviewTitle>
              <PreviewPic><Schematic /></PreviewPic>
              <HintBox>
                <HintLabel>提示信息:</HintLabel>
                <HintText>
                  规范算法：来源11G101-3第58页的“墙插<br />
                  筋在基础中锚固构造”节点；垂直筋伸至<br />
                  基础底部弯折，弯折长度a取计算设置中的<br />
                  数值。
                </HintText>
              </HintBox>
            </Preview>
          </NodeMain>
          <BtnRow>
            <DlgBtn $primary>确定</DlgBtn>
            <DlgBtn>取消</DlgBtn>
          </BtnRow>
        </NodeInner>
      </WinNode>

      <Overlay width="1180" height="666" viewBox="0 0 1180 666" fill="none">
        <ellipse cx="252" cy="509" rx="50" ry="9" stroke="#e8606a" />
        <ellipse cx="834.5" cy="209.5" rx="38.5" ry="20.5" stroke="#f06a6a" />
        <ellipse cx="1059" cy="320" rx="40" ry="14.5" stroke="#a82a2a" />
        <path d="M301 500 792 222 788 219 805.7 217 795 232 794 228Z" fill="#f23c3c" />
        <path d="M873 213 999 290 1000 287 1008 302 992 300 994 296Z" fill="#f24a4a" />
      </Overlay>
    </Page>
  );
}
